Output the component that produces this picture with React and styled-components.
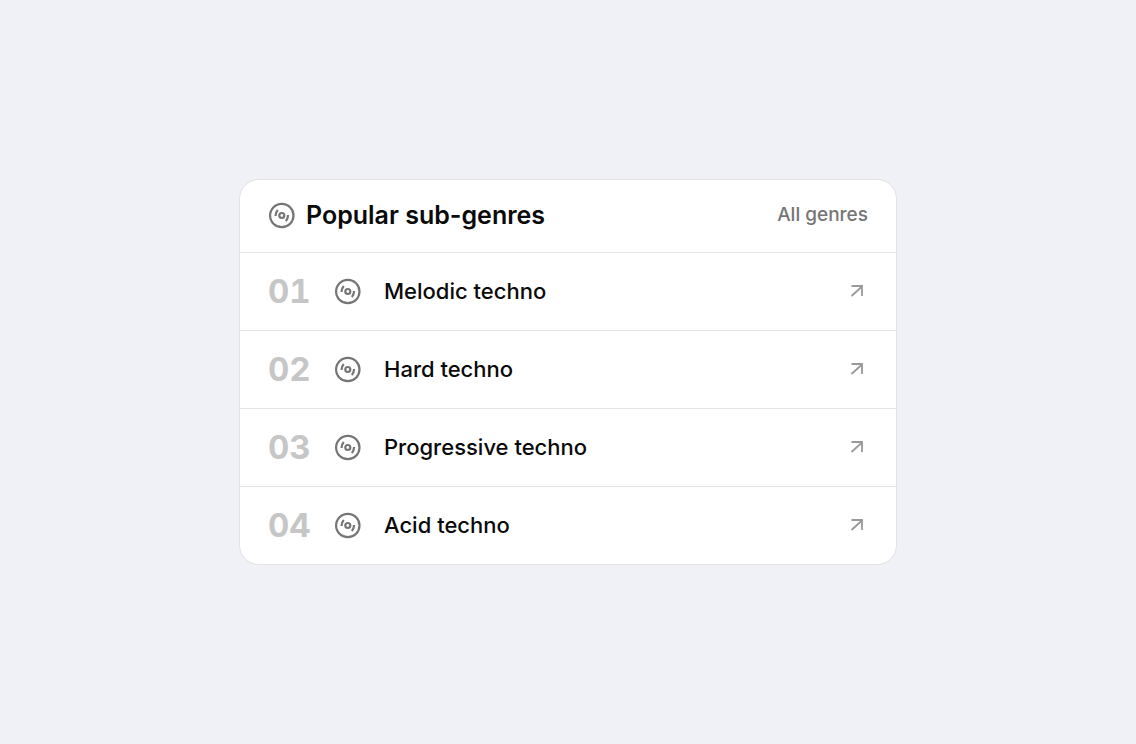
import React from "react";
import styled, { createGlobalStyle } from "styled-components";

const genres = ["Melodic techno", "Hard techno", "Progressive techno", "Acid techno"];

const DiscIcon = () => (
  <Disc viewBox="0 0 27 27" aria-hidden="true">
    <circle cx="13.8" cy="13.5" r="11.7" />
    <circle cx="13.8" cy="13.5" r="2.5" />
    <path d="M7.5 14c.1-2.4.8-4.3 2.3-5.9M20.1 13c-.1 2.4-.8 4.3-2.3 5.9" />
  </Disc>
);

const ArrowIcon = () => (
  <Arrow viewBox="0 0 14 12" aria-hidden="true">
    <path d="M1.5 11 12 1.5M1.5 1H12v10" />
  </Arrow>
);

export default function App() {
  return (
    <>
      <GlobalStyle />
      <Page>
        <Card>
          <Header>
            <DiscIcon />
            <Title>Popular sub-genres</Title>
            <AllLink href="#genres">All genres</AllLink>
          </Header>
          <List>
            {genres.map((genre, i) => (
              <Item key={genre}>
                <Row href="#genre">
                  <Rank>{String(i + 1).padStart(2, "0")}</Rank>
                  <DiscIcon />
                  <Name>{genre}</Name>
                  <ArrowIcon />
                </Row>
              </Item>
            ))}
          </List>
        </Card>
      </Page>
    </>
  );
}

const GlobalStyle = createGlobalStyle`
  * {
    box-sizing: border-box;
  }

  body {
    margin: 0;
    background-color: #eff1f6;
    font-family: Inter, sans-serif;
  }
`;

const Page = styled.main`
  display: flex;
  justify-content: center;
  align-items: center;
  min-height: 100vh;
  padding: 24px;
`;

const Card = styled.section`
  width: 100%;
  max-width: 658px;
  border: 1px solid #e3e3e5;
  border-radius: 20px;
  background-color: white;
`;

const Header = styled.header`
  display: flex;
  align-items: center;
  padding: 19px 28px 21px;
`;

const Title = styled.h2`
  flex: 1;
  margin: 0 0 0 11px;
  color: #0a0a0a;
  font-size: 25px;
  font-weight: 600;
  line-height: 32px;
`;

const AllLink = styled.a`
  color: #757575;
  font-size: 19px;
  font-weight: 500;
  line-height: 24px;
  text-decoration: none;
`;

const List = styled.ol`
  margin: 0;
  padding: 0;
  list-style: none;
`;

const Item = styled.li`
  border-top: 1px solid #e4e4e4;
`;

const Row = styled.a`
  display: flex;
  align-items: center;
  padding: 18px 32px 19px 28px;
  text-decoration: none;
`;

const Rank = styled.span`
  width: 66px;
  color: #c6c6c6;
  font-size: 33px;
  font-weight: 700;
  font-variant-numeric: tabular-nums;
  line-height: 40px;
`;

const Name = styled.span`
  flex: 1;
  margin-left: 23px;
  color: #0a0a0a;
  font-size: 22px;
  font-weight: 500;
  line-height: 28px;
`;

const Disc = styled.svg`
  flex: none;
  width: 27px;
  height: 27px;
  fill: none;
  stroke: #757575;
  stroke-width: 2.2;
`;

const Arrow = styled.svg`
  flex: none;
  width: 14px;
  height: 12px;
  fill: none;
  stroke: #999;
  stroke-width: 1.8;
`;
